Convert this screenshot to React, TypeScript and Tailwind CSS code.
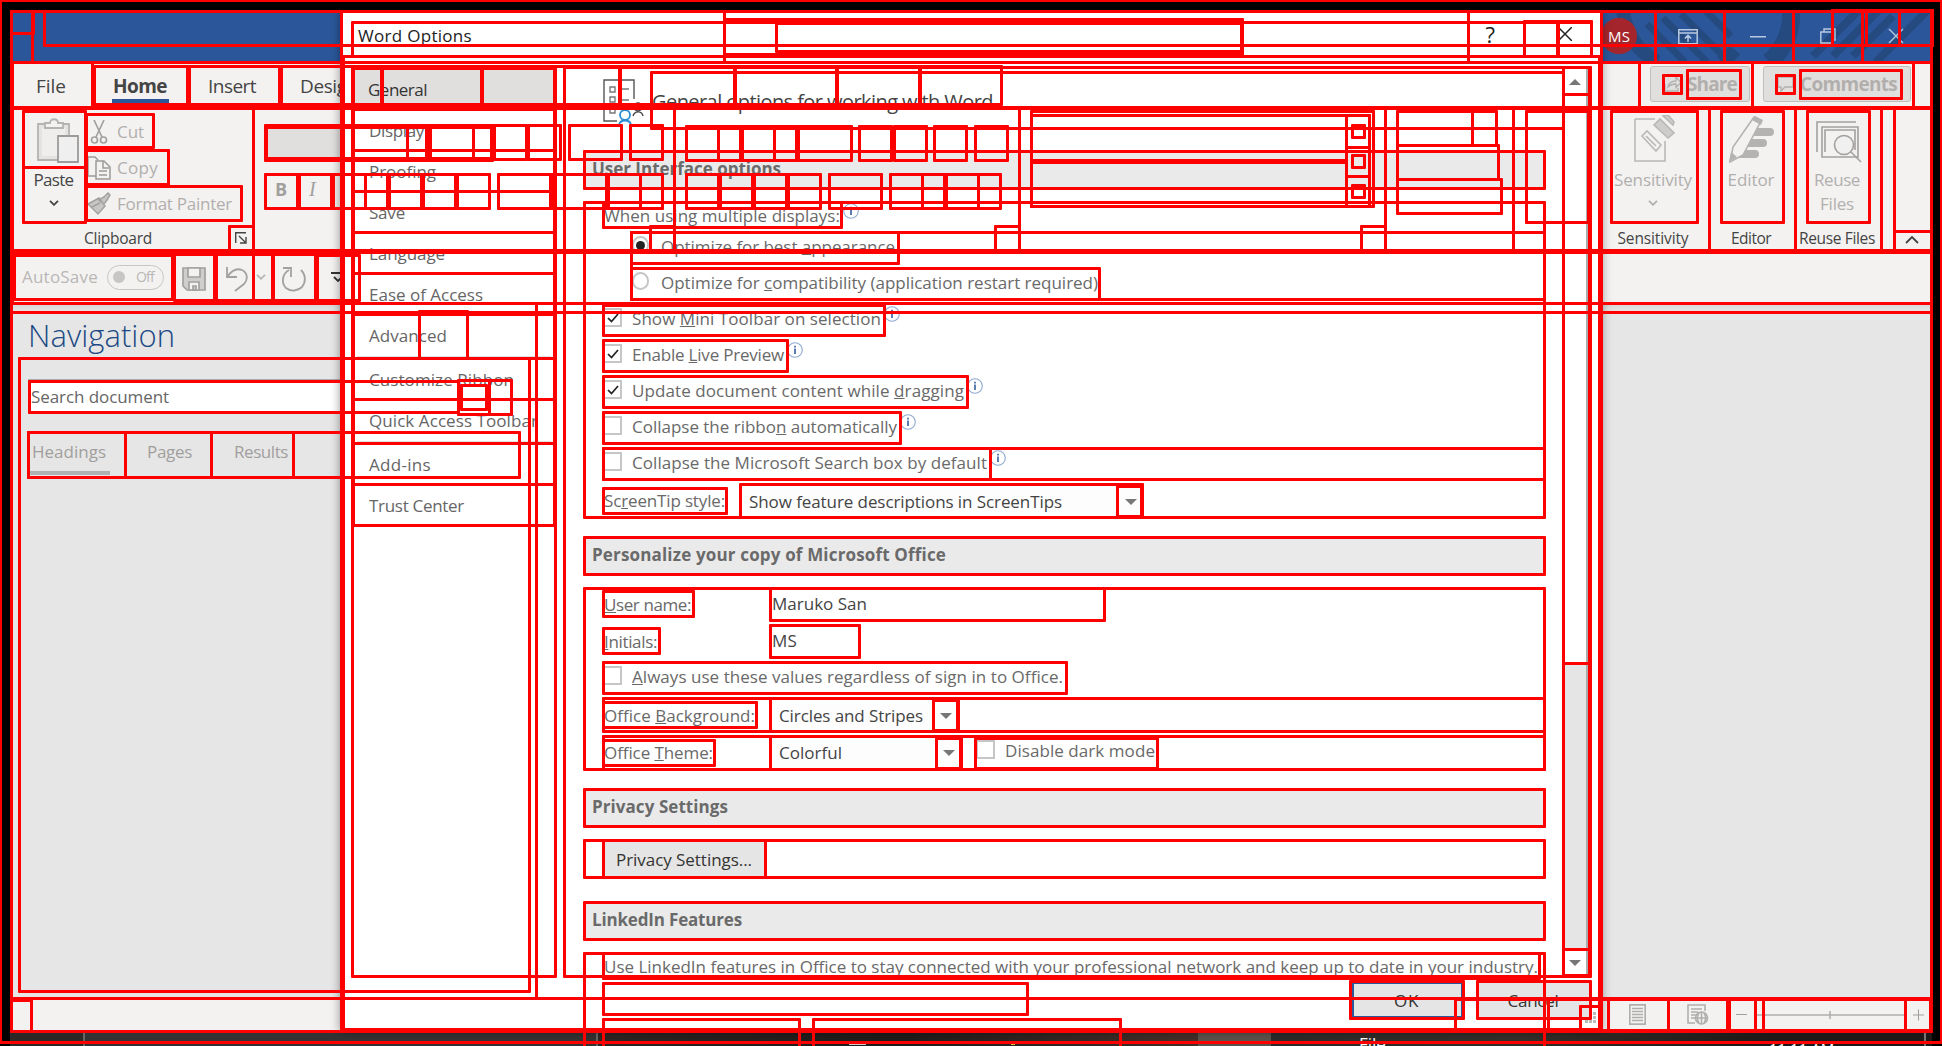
import { useLayoutEffect, useRef, useState, type ReactNode } from "react";

/* Text run whose tracking is tuned at mount so that it spans exactly `w` pixels. */
function Fit({ w, className = "", children }: { w: number; className?: string; children: ReactNode }) {
  const ref = useRef<HTMLSpanElement>(null);
  const [spacing, setSpacing] = useState(0);
  useLayoutEffect(() => {
    const el = ref.current;
    if (!el) return;
    const length = el.textContent?.length ?? 1;
    setSpacing((w - el.getBoundingClientRect().width) / length);
  }, [w]);
  return (
    <span ref={ref} className={`inline-block shrink-0 whitespace-nowrap ${className}`} style={{ letterSpacing: `${spacing}px` }}>
      {children}
    </span>
  );
}

function Chevron({ className = "" }: { className?: string }) {
  return (
    <svg viewBox="0 0 10 6" className={`h-[6px] w-[10px] shrink-0 ${className}`} fill="none" stroke="currentColor" strokeWidth="1.8">
      <path d="M1 .8 5 4.8 9 .8" />
    </svg>
  );
}

function Info() {
  return (
    <svg viewBox="0 0 16 18" className="relative -top-[5px] ml-[3px] h-[18px] w-[16px] shrink-0" fill="none">
      <circle cx="8" cy="9" r="7.3" stroke="#8ea9d0" strokeWidth="1.1" />
      <path d="M8 7.6V13M8 4.8v1.6" stroke="#3f66a3" strokeWidth="1.7" />
    </svg>
  );
}

function Triangle({ up = false }: { up?: boolean }) {
  return (
    <svg viewBox="0 0 12 6" className="h-[6px] w-[12px]" fill="#777">
      <path d={up ? "M0 6 6 0l6 6z" : "M0 0h12L6 6z"} />
    </svg>
  );
}

/* ---------- Word window ---------- */

function TitleBar() {
  return (
    <div className="flex h-[52px] shrink-0 bg-[#2b579a]">
      <div className="relative ml-auto flex w-[331px] overflow-hidden">
        <svg viewBox="0 0 331 52" className="absolute inset-0 h-full w-full" fill="none" stroke="#254a80">
          <path d="M22 0C24 22 36 40 56 52M120 52A62 62 0 0 0 134 40" strokeWidth="14" />
          <path d="M46 14 84 52M62 8 106 52M80 4 124 48M104 0 130 26" strokeWidth="7" />
          <path d="M168 52A62 62 0 0 0 190 0" strokeWidth="18" />
          <path d="M212 46 258 0M232 46 278 0M252 46 292 6M275 52 327 0" strokeWidth="8" />
        </svg>
        <div className="relative mt-[8px] flex h-[36px] w-[36px] items-center justify-center rounded-full bg-[#a4262c] text-[15px] text-white">
          <Fit w={22}>MS</Fit>
        </div>
        <div className="relative ml-[16px] flex h-full w-[276px] items-center text-[#b9c9e0]">
          <span className="flex w-[70px] justify-center pt-[1px]">
            <svg viewBox="0 0 20 16" className="h-[16px] w-[20px]" fill="none" stroke="currentColor" strokeWidth="1.5">
              <path d="M.8.8h18.4v14H.8zM.8 4h18.4M10 13V6.5M6.8 9.5 10 6.3l3.2 3.2" />
            </svg>
          </span>
          <span className="flex w-[70px] justify-center pt-[2px]">
            <svg viewBox="0 0 16 2" className="h-[2px] w-[16px]" fill="currentColor"><path d="M0 0h16v1.5H0z" /></svg>
          </span>
          <span className="flex w-[69px] justify-center">
            <svg viewBox="0 0 16 16" className="h-[16px] w-[16px]" fill="none" stroke="currentColor" strokeWidth="1.4">
              <path d="M.8 4h11v11H.8zM4 4V1h11v11h-3" />
            </svg>
          </span>
          <span className="flex w-[67px] justify-center">
            <svg viewBox="0 0 16 16" className="h-[16px] w-[16px]" fill="none" stroke="currentColor" strokeWidth="1.4">
              <path d="m1 1 14 14M15 1 1 15" />
            </svg>
          </span>
        </div>
      </div>
    </div>
  );
}

function TabRow() {
  return (
    <div className="flex h-[46px] shrink-0 pt-[11px] text-[19px] leading-[26px] text-[#444]">
      <div className="ml-[26px] w-[77px]"><Fit w={30}>File</Fit></div>
      <div className="w-[95px]">
        <Fit w={54} className="font-bold">Home</Fit>
        <div className="-ml-px h-[4px] w-[57px] bg-[#2b579a]" />
      </div>
      <div className="w-[92px]"><Fit w={48}>Insert</Fit></div>
      <div><Fit w={58}>Design</Fit></div>
      <div className="-mt-[7px] mr-[21px] ml-auto flex gap-[13px] font-bold text-[#b1afad]">
        <div className="flex h-[36px] w-[100px] items-center rounded-[3px] border border-[#c0bebc] bg-[#e1dfdd] pl-[13px]">
          <svg viewBox="0 0 18 16" className="mr-[5px] h-[16px] w-[18px]" fill="none" stroke="currentColor" strokeWidth="1.3">
            <path d="M1 8v7h13v-3M4 11c1-5 4-6 8-6V1l5 5.500-5 5V8c-4 0-6 1-8 3z" />
          </svg>
          <Fit w={50}>Share</Fit>
        </div>
        <div className="flex h-[36px] w-[148px] items-center rounded-[3px] border border-[#c0bebc] bg-[#e1dfdd] pl-[13px]">
          <svg viewBox="0 0 18 16" className="mr-[5px] h-[16px] w-[18px]" fill="none" stroke="currentColor" strokeWidth="1.3">
            <path d="M1 1h15v10H8l-4 4v-4H1z" />
          </svg>
          <Fit w={97}>Comments</Fit>
        </div>
      </div>
    </div>
  );
}

function Ribbon() {
  return (
    <div className="flex h-[143px] shrink-0 text-[17px] leading-5 text-[#b1afad]">
      <div className="ml-[13px] flex w-[230px] flex-col">
        <div className="flex h-[114px]">
          <div className="flex w-[61px] flex-col items-center pt-[10px]">
            <svg viewBox="0 0 42 46" className="ml-[8px] h-[46px] w-[42px]" fill="#e4e3e2" stroke="#b5b3b1" strokeWidth="1.8">
              <path d="M1 6h31v36H1z" />
              <path d="M5 10h23v28H5z" fill="#efeeed" stroke="none" />
              <path d="M8 10V5h5c0-5 8-5 8 0h5v5z" fill="#f3f2f1" />
              <path d="M21 18h20v26H21z" fill="#efefef" stroke="#9d9b99" />
            </svg>
            <Fit w={40} className="mt-[6px] text-[#444]">Paste</Fit>
            <Chevron className="mt-[10px] text-[#444]" />
          </div>
          <div className="flex flex-col pt-[6px] pl-[3px]">
            <div className="flex h-[36px] items-center">
              <svg viewBox="0 0 24 24" className="mr-[6px] h-[24px] w-[24px]" fill="none" stroke="#a3a19f" strokeWidth="1.7">
                <path d="m7 0 8 17M17 0 9 17" /><circle cx="7.500" cy="20" r="3" /><circle cx="16.500" cy="20" r="3" />
              </svg>
              <Fit w={27}>Cut</Fit>
            </div>
            <div className="flex h-[36px] items-center">
              <svg viewBox="0 0 24 24" className="mr-[6px] h-[24px] w-[24px]" fill="none" stroke="#9d9b99" strokeWidth="1.5">
                <path d="M9 20H1V1h7l3 3M9 5h8l6 6v12H9zM16 5v7h6M12 15h8M12 19h8" />
              </svg>
              <Fit w={41}>Copy</Fit>
            </div>
            <div className="flex h-[36px] items-center">
              <svg viewBox="0 0 24 24" className="mr-[6px] h-[24px] w-[24px]" fill="#c8c6c4" stroke="#a3a19f" strokeWidth="1.5">
                <path d="M1 12 12 6l6 8-7 8zM12 8l5-3 4-4 2 2-3 5-3 4zM5 15l8-4" />
              </svg>
              <Fit w={115}>Format Painter</Fit>
            </div>
          </div>
        </div>
        <div className="flex items-center pt-[6px] pl-[61px] text-[15.500px] text-[#444]">
          <Fit w={68}>Clipboard</Fit>
          <svg viewBox="0 0 12 12" className="ml-[83px] h-[12px] w-[12px]" fill="none" stroke="#444" strokeWidth="1.4">
            <path d="M.7 11V.7H11M4 4l6 6M11 5v6H5" />
          </svg>
        </div>
      </div>
      <div className="pt-[19px] pl-[14px]">
        <div className="h-[31px] w-[90px] bg-[#e1dfdd]" />
        <div className="mt-[21px] flex gap-[22px] pl-[8px] text-[18px] text-[#a19f9d]">
          <span className="w-[12px] font-bold">B</span>
          <span className="font-['Liberation_Serif',serif] text-[20px] italic">I</span>
        </div>
      </div>
      <div className="ml-auto flex">
        <div className="flex w-[112px] flex-col items-center pt-[7px]">
          <svg viewBox="0 0 42 48" className="ml-[4px] h-[48px] w-[42px]" fill="none" stroke="#bab8b6" strokeWidth="1.6">
            <path d="M1 4h20M31 26v20H1V4" />
            <path d="m8 21 5-5 14 14-5 6zM12 21l10 10" />
            <path d="m20 10 6-6 14 14-6 5zM29 1l10 9 1-3-6-7z" fill="#cfcdcb" />
          </svg>
          <Fit w={78} className="mt-[7px]">Sensitivity</Fit>
          <Chevron className="mt-[10px]" />
          <Fit w={71} className="mt-auto mb-[3px] text-[15.500px] text-[#444]">Sensitivity</Fit>
        </div>
        <div className="flex w-[84px] flex-col items-center pt-[7px]">
          <svg viewBox="0 0 46 48" className="h-[48px] w-[46px]" fill="#b5b3b1">
            <path d="M30 13h12a4 4 0 0 1 0 8H24zM24 24h11a4 4 0 0 1 0 8H18zM17 35h10a4 4 0 0 1 0 8H10z" />
            <path d="M26 2 33 6 15 40 2 47 5 32z" fill="#f3f2f1" stroke="#b5b3b1" strokeWidth="1.6" />
            <path d="m24 5 3-4 8 4-2 5zM1 47l2-10 6 5z" />
          </svg>
          <Fit w={47} className="mt-[7px]">Editor</Fit>
          <Fit w={40} className="mt-auto mb-[3px] text-[15.500px] text-[#444]">Editor</Fit>
        </div>
        <div className="flex w-[88px] flex-col items-center pt-[11px]">
          <svg viewBox="0 0 46 44" className="ml-[4px] h-[44px] w-[46px]" fill="none" stroke="#a3a19f" strokeWidth="1.6">
            <path d="M1 33V3h39M6 36V8h36v30H6zM9 33V11h30v20" />
            <circle cx="28" cy="26" r="9.500" fill="#f0f0f0" /><path d="m35 33 10 10" />
          </svg>
          <Fit w={46} className="mt-[7px]">Reuse</Fit>
          <Fit w={34} className="mt-[4px]">Files</Fit>
          <Fit w={76} className="mt-auto mb-[3px] text-[15.500px] text-[#444]">Reuse Files</Fit>
        </div>
        <div className="flex w-[51px] items-end justify-center pr-[3px] pb-[7px] pl-[13px]">
          <svg viewBox="0 0 14 8" className="h-[8px] w-[14px]" fill="none" stroke="#444" strokeWidth="1.8"><path d="m1 7 6-6 6 6" /></svg>
        </div>
      </div>
    </div>
  );
}

function QuickAccess() {
  return (
    <div className="flex h-[52px] shrink-0 items-center pl-[12px] text-[17px] text-[#b9b7b5]">
      <Fit w={76}>AutoSave</Fit>
      <div className="ml-[9px] flex h-[25px] w-[57px] items-center rounded-full border border-[#c8c6c4] pl-[5px] text-[14px]">
        <span className="mr-[11px] h-[12px] w-[12px] rounded-full bg-[#c8c6c4]" />
        <Fit w={18} className="leading-none">Off</Fit>
      </div>
      <svg viewBox="0 0 24 24" className="mt-[3px] ml-[18px] h-[24px] w-[24px]" fill="#d0cecc" stroke="#a3a19f" strokeWidth="1.7">
        <path d="M1 1h22v22H5l-4-4z" /><path d="M6 1h12v9H6zM7 15h10v8H7z" fill="#f3f2f1" /><path d="M11 19h3v4h-3z" />
      </svg>
      <svg viewBox="0 0 24 26" className="mt-[3px] ml-[19px] h-[26px] w-[24px]" fill="none" stroke="#a3a19f" strokeWidth="1.8">
        <path d="M2 1v10h10M2 11C7 4 12 2 17 4c6 3 6 10 2 14l-9 7" />
      </svg>
      <Chevron className="ml-[7px]" />
      <svg viewBox="0 0 26 26" className="mt-[3px] ml-[15px] h-[26px] w-[26px]" fill="none" stroke="#a3a19f" strokeWidth="1.8">
        <path d="M2 2h8v9M8 4C1 8 0 17 5 22c5 4 12 3 16-1 4-5 4-12-1-17" />
      </svg>
      <svg viewBox="0 0 14 10" className="ml-[24px] h-[10px] w-[14px]" fill="none" stroke="#333" strokeWidth="1.8"><path d="M0 1h14M3 5l4 4 4-4" /></svg>
    </div>
  );
}

function Navigation() {
  return (
    <div className="flex-1 bg-[#e6e6e6]">
      <div className="h-[67px] pt-[2px] pl-[18px] text-[31px] leading-[42px] text-[#1b4a85]"><Fit w={147} className="font-light">Navigation</Fit></div>
      <div className="ml-[18px] flex h-[35px] w-[480px] items-center border border-[#ababab] bg-white pl-[2px] text-[17px] text-[#666]">
        <Fit w={138}>Search document</Fit>
      </div>
      <div className="mt-[27px] ml-[22px] flex text-[17px] leading-[22px] text-[#a19f9d]">
        <div className="w-[115px]">
          <Fit w={74}>Headings</Fit>
          <div className="mt-[8px] -ml-[2px] h-[4px] w-[80px] bg-[#b1b1b1]" />
        </div>
        <div className="w-[87px]"><Fit w={45}>Pages</Fit></div>
        <Fit w={54}>Results</Fit>
      </div>
    </div>
  );
}

function StatusBar() {
  return (
    <div className="flex h-[33px] shrink-0 items-center bg-[#f3f2f1] text-[#b1afad]">
      <svg viewBox="0 0 17 21" className="ml-auto h-[21px] w-[17px]" fill="none" stroke="currentColor" strokeWidth="1.7">
        <path d="M.8.8h15.400v19.400H.8zM3 4.500h11M3 7.500h11M3 10.500h11M3 13.500h11M3 16.500h11" />
      </svg>
      <svg viewBox="0 0 22 21" className="mr-[27px] ml-[41px] h-[21px] w-[22px]" fill="none" stroke="currentColor" strokeWidth="1.6">
        <path d="M8 19H1V1h17v6M4 5h11M4 8h7M4 11h5M4 14h4" /><circle cx="14.500" cy="14" r="6" /><path d="M8.500 14h12M14.500 8v12M12 9c-2 3-2 7 0 10M17 9c2 3 2 7 0 10" />
      </svg>
      <span className="h-px w-[11px] bg-[#a19f9d]" />
      <svg viewBox="0 0 150 8" className="mr-[8px] ml-[10px] h-[8px] w-[148px]" stroke="currentColor" strokeWidth="1.6"><path d="M0 4h150M74 0v8" /></svg>
      <svg viewBox="0 0 12 12" className="mr-[8px] h-[12px] w-[11px]" stroke="#a19f9d" strokeWidth="1.1"><path d="M0 6h12M6 0v12" /></svg>
    </div>
  );
}

function Taskbar() {
  return (
    <div className="mx-[10px] flex h-[15px] overflow-hidden bg-[#333]">
      <div className="w-[73px] bg-[#2d2825]" />
      <div className="w-[2px] bg-[#666]" />
      <div className="w-[511px]" />
      <div className="w-[2px] bg-[#666]" />
      <div className="flex w-[600px] bg-linear-to-r from-[#2c2523] via-[#1d1c1b] to-[#45302a]">
        <span className="mt-[12px] ml-[251px] h-[2px] w-[17px] bg-[#ccc]" />
        <span className="mt-[12px] ml-[145px] h-[2px] w-[4px] bg-[#e8c43c]" />
      </div>
      <div className="w-[73px] bg-[#5c534c]" />
      <div className="flex-1 bg-linear-to-r from-[#2b2b2b] via-[#33302a] to-[#1c1918] pt-[3px] pl-[88px] text-[17px] leading-5 text-white">File</div>
      <div className="w-[155px] overflow-hidden bg-[#1c1918] pt-[9px] text-[15px] leading-4 text-white">11:11 AM</div>
      <div className="w-[2px] bg-[#777]" />
      <div className="w-[6px] bg-[#1c1918]" />
    </div>
  );
}

/* ---------- Word Options dialog ---------- */

const categories: { label: string; w: number; end?: boolean }[] = [
  { label: "General", w: 59 },
  { label: "Display", w: 55 },
  { label: "Proofing", w: 67 },
  { label: "Save", w: 36 },
  { label: "Language", w: 76 },
  { label: "Ease of Access", w: 114 },
  { label: "Advanced", w: 78, end: true },
  { label: "Customize Ribbon", w: 145 },
  { label: "Quick Access Toolbar", w: 169, end: true },
  { label: "Add-ins", w: 62 },
  { label: "Trust Center", w: 95 },
];

function CategoryList() {
  return (
    <div className="w-[202px] shrink-0 text-[17px] leading-5 text-[#666]">
      {categories.map((c, i) => (
        <div key={c.label}>
          <div className={i === 0 ? "flex h-[41px] items-center border border-dotted border-[#555] bg-[#e1dfdd] pt-[2px] pl-[14px] text-[#333] outline-2 outline-[#b0b0b0]" : "flex h-[41px] items-center pt-[2px] pl-[16px]"}>
            <Fit w={c.w}>{c.label}</Fit>
          </div>
          {c.end && <div className="mx-[4px] my-px h-px bg-[#e1e1e1]" />}
        </div>
      ))}
    </div>
  );
}

function Section({ title, w }: { title: string; w: number }) {
  return (
    <div className="flex h-[38px] items-center bg-[#eaeaea] pb-[2px] pl-[7px] font-bold text-[#6a6a6a]">
      <Fit w={w}>{title}</Fit>
    </div>
  );
}

function Check({ on = false, w, children }: { on?: boolean; w: number; children: ReactNode }) {
  return (
    <div className="flex items-center">
      <span className="relative -top-[1.500px] mr-[10px] flex h-[19px] w-[19px] items-center justify-center border-2 border-[#c6c6c6] bg-white">
        {on && (
          <svg viewBox="0 0 12 10" className="h-[10px] w-[12px]" fill="none" stroke="#222" strokeWidth="1.7"><path d="m1 5 3.500 3.500L11 1" /></svg>
        )}
      </span>
      <Fit w={w}>{children}</Fit>
    </div>
  );
}

function Radio({ on = false, w, children }: { on?: boolean; w: number; children: ReactNode }) {
  return (
    <div className="flex h-[36px] items-center pl-[47px]">
      <span className="relative -top-[2px] mr-[12px] flex h-[18px] w-[17px] items-center justify-center rounded-full border-2 border-[#c6c6c6]">
        {on && <span className="h-[9px] w-[9px] rounded-full bg-[#222]" />}
      </span>
      <Fit w={w}>{children}</Fit>
    </div>
  );
}

function Combo({ className, w, children }: { className: string; w: number; children: ReactNode }) {
  return (
    <div className={`flex h-[33px] items-center justify-between bg-[#fdfdfd] pt-px pr-[7px] pl-[8px] text-[#444] ${className}`}>
      <Fit w={w}>{children}</Fit>
      <Triangle />
    </div>
  );
}

function Options() {
  return (
    <div className="flex h-full flex-1 overflow-hidden text-[17px] leading-5 text-[#696969]">
      <div className="w-[998px] pl-[20px]">
        <div className="flex h-[83px] pl-[18px]">
          <svg viewBox="0 0 42 46" className="mt-[11px] h-[46px] w-[42px]" fill="none" stroke="#555" strokeWidth="1.400">
            <path d="M31 20V1H1v41h13" />
            <path d="M7 8h5v5H7zM7 18h5v5H7zM7 29h5v5H7zM17 10h9M17 21h9" stroke="#777" />
            <circle cx="35" cy="28" r="4" stroke="#444" /><path d="M30 37c2-6 9-5 10 0" stroke="#444" />
            <circle cx="22" cy="36" r="5" stroke="#2a8dd4" strokeWidth="1.800" /><path d="M16 46c1-6 11-6 12 0" stroke="#2a8dd4" strokeWidth="1.800" />
          </svg>
          <Fit w={341} className="mt-[21px] ml-[7px] text-[20px] leading-[26px] text-[#444]">General options for working with Word</Fit>
        </div>
        <div className="w-[960px]">
          <Section title="User Interface options" w={189} />
          <div className="mt-[12px] flex h-[28px] items-center pt-[2px] pl-[19px]">
            <Fit w={236}>When using multiple displays:</Fit><Info />
          </div>
          <Radio on w={234}>Optimize for best <u>a</u>ppearance</Radio>
          <Radio w={437}>Optimize for <u>c</u>ompatibility (application restart required)</Radio>
          <div className="flex h-[36px] items-center pl-[18px]"><Check on w={249}>Show <u>M</u>ini Toolbar on selection</Check><Info /></div>
          <div className="flex h-[36px] items-center pl-[18px]"><Check on w={152}>Enable <u>L</u>ive Preview</Check><Info /></div>
          <div className="flex h-[36px] items-center pl-[18px]"><Check on w={332}>Update document content while <u>d</u>ragging</Check><Info /></div>
          <div className="flex h-[36px] items-center pl-[18px]"><Check w={265}>Collapse the ribbo<u>n</u> automatically</Check><Info /></div>
          <div className="flex h-[36px] items-center pl-[18px]"><Check w={355}>Collapse the Microsoft Search box by default</Check><Info /></div>
          <div className="mt-[3px] flex h-[34px] items-center pl-[19px]">
            <Fit w={121}>Sc<u>r</u>eenTip style:</Fit>
            <Combo className="ml-[16px] w-[403px]" w={313}>Show feature descriptions in ScreenTips</Combo>
          </div>
          <div className="h-[19px]" />
          <Section title="Personalize your copy of Microsoft Office" w={354} />
          <div className="mt-[13px] flex h-[33px] items-center pl-[19px]">
            <div className="w-[168px]"><Fit w={87}><u>U</u>ser name:</Fit></div>
            <Fit w={95} className="-mt-[2px] text-[#444]">Maruko San</Fit>
          </div>
          <div className="mt-[4px] flex h-[33px] items-center pl-[19px]">
            <div className="w-[168px]"><Fit w={53}><u>I</u>nitials:</Fit></div>
            <Fit w={25} className="-mt-[2px] text-[#444]">MS</Fit>
          </div>
          <div className="mt-[4px] flex h-[32px] items-center pb-[3px] pl-[18px]"><Check w={431}><u>A</u>lways use these values regardless of sign in to Office.</Check></div>
          <div className="mt-[4px] flex h-[34px] items-center pl-[19px]">
            <div className="w-[167px] pt-px"><Fit w={151}>Office <u>B</u>ackground:</Fit></div>
            <Combo className="w-[188px]" w={144}>Circles and Stripes</Combo>
          </div>
          <div className="mt-[4px] flex h-[33px] items-center pl-[19px]">
            <div className="w-[167px] pt-px"><Fit w={109}>Office <u>T</u>heme:</Fit></div>
            <Combo className="mr-[14px] w-[191px]" w={63}>Colorful</Combo>
            <div className="pb-[3px]"><Check w={150}>Disable dark mode</Check></div>
          </div>
          <div className="h-[20px]" />
          <Section title="Privacy Settings" w={136} />
          <div className="mt-[13px] ml-[19px] flex h-[38px] w-[161px] items-center bg-[#e5e5e5] pt-[2px] pl-[12px] text-[#333]">
            <Fit w={136}>Privacy Settings...</Fit>
          </div>
          <div className="h-[24px]" />
          <Section title="LinkedIn Features" w={150} />
          <div className="mt-[17px] pl-[19px]">
            <Fit w={934}>Use LinkedIn features in Office to stay connected with your professional network and keep up to date in your industry.</Fit>
          </div>
        </div>
      </div>
      <div className="flex w-[25px] flex-col border-r-2 border-[#ababab] bg-[#e5e5e5]">
        <div className="flex h-[27px] items-center justify-center bg-white"><Triangle up /></div>
        <div className="h-[568px] bg-white" />
        <div className="mt-auto flex h-[26px] items-center justify-center border-b border-[#ababab] bg-white"><Triangle /></div>
      </div>
    </div>
  );
}

function Dialog() {
  return (
    <div className="absolute top-[12px] left-[342px] flex h-[1018px] w-[1258px] flex-col bg-white shadow-[0_0_9px_2px_rgba(0,0,0,0.400)]">
      <div className="flex h-[56px] shrink-0 pl-[16px] text-[#222]">
        <Fit w={114} className="pt-[12px] text-[17px] leading-6">Word Options</Fit>
        <span className="mt-[6px] mr-[63px] ml-auto text-[22px] leading-[32px]">?</span>
        <svg viewBox="0 0 14 14" className="mt-[15px] mr-[28px] h-[14px] w-[14px]" stroke="currentColor" strokeWidth="1.500"><path d="m0 0 14 14M14 0 0 14" /></svg>
      </div>
      <div className="flex h-[908px] shrink-0 pl-[11px]">
        <CategoryList />
        <div className="w-[10px]" />
        <Options />
        <div className="w-[10px]" />
      </div>
      <div className="flex h-[54px] pt-[6px] text-[17px] leading-5 text-[#333]">
        <div className="ml-[1010px] flex h-[36px] w-[111px] items-center justify-center border-2 border-[#2b579a] bg-[#e5e5e5] pt-px pr-[2px]"><Fit w={25}>OK</Fit></div>
        <div className="ml-[15px] flex h-[36px] w-[112px] items-center justify-center bg-[#e5e5e5] pt-px pr-[2px]"><Fit w={51}>Cancel</Fit></div>
        <svg viewBox="0 0 12 12" className="mt-[30px] -ml-[5px] h-[12px] w-[12px]" fill="#bbb">
          <path d="M8 0h3v3H8zM8 4h3v3H8zM8 8h3v3H8zM4 4h3v3H4zM4 8h3v3H4zM0 8h3v3H0z" />
        </svg>
      </div>
    </div>
  );
}

/* ---------- Accessibility element bounds: [left, top, right, bottom] of each outline's centre line ---------- */

const bounds: [number, number, number, number][] = [
  [0, 0, 1941, 1042], [11, 11, 1931, 1031], [11, 11, 33, 33], [11, 11, 32, 62], [44, 11, 1932, 45], [11, 11, 1931, 62],
  [1832, 10, 1862, 45], [1866, 10, 1899, 45], [1899, 10, 1932, 45], [1832, 10, 1932, 45],
  [1601, 11, 1655, 62], [1655, 11, 1724, 62], [1724, 11, 1793, 62], [1793, 11, 1862, 62], [1862, 11, 1931, 62],
  [341, 11, 1601, 1031], [343, 56, 1599, 1029], [352, 22, 1591, 56], [1524, 21, 1557, 56], [1558, 21, 1591, 56],
  [724, 11, 1468, 62], [724, 19, 1242, 54], [776, 23, 1241, 51],
  [11, 62, 92, 107], [94, 66, 187, 104], [189, 66, 279, 104], [281, 66, 381, 104], [382, 66, 481, 104], [482, 66, 619, 104],
  [620, 66, 734, 104], [735, 66, 836, 104], [837, 66, 919, 104], [920, 66, 1001, 104],
  [12, 62, 1931, 107], [11, 108, 1931, 250], [12, 108, 253, 251],
  [352, 67, 555, 976], [353, 68, 554, 108], [353, 109, 554, 150], [353, 150, 554, 191], [353, 191, 554, 232], [353, 232, 554, 273],
  [353, 273, 554, 314], [353, 314, 554, 358], [353, 358, 554, 399], [353, 399, 554, 443], [353, 443, 554, 484], [353, 484, 554, 525],
  [564, 67, 1590, 976], [1563, 67, 1589, 94], [1563, 94, 1589, 663], [1563, 663, 1589, 949], [1563, 949, 1589, 975],
  [23, 111, 85, 167], [23, 167, 85, 222], [86, 114, 153, 147], [86, 150, 168, 184], [86, 186, 241, 220], [229, 226, 253, 250],
  [265, 125, 427, 160], [266, 127, 407, 158], [407, 127, 426, 158], [429, 125, 492, 160], [430, 127, 473, 158], [473, 127, 491, 158],
  [494, 125, 526, 159], [528, 125, 560, 159], [569, 125, 621, 159], [630, 125, 662, 159],
  [686, 126, 718, 160], [718, 126, 740, 160], [742, 126, 774, 160], [774, 126, 796, 160], [798, 126, 851, 160], [859, 126, 891, 160],
  [894, 126, 926, 160], [934, 126, 966, 160], [975, 126, 1007, 160],
  [265, 174, 297, 208], [299, 174, 331, 208], [333, 174, 365, 208], [365, 174, 387, 208], [389, 174, 421, 208], [423, 174, 455, 208],
  [457, 174, 489, 208], [498, 174, 550, 208], [552, 174, 606, 208], [608, 174, 640, 208], [640, 174, 662, 208],
  [686, 174, 718, 208], [720, 174, 752, 208], [754, 174, 786, 208], [788, 174, 820, 208], [829, 174, 881, 208], [890, 174, 922, 208],
  [922, 174, 944, 208], [946, 174, 978, 208], [978, 174, 1000, 208],
  [253, 108, 674, 250], [650, 226, 674, 250], [674, 108, 1019, 250], [995, 226, 1019, 250], [1019, 108, 1385, 250], [1361, 226, 1385, 250],
  [1031, 111, 1373, 206], [1031, 115, 1369, 206], [1031, 115, 1346, 160], [1031, 162, 1346, 206], [1346, 115, 1369, 147], [1346, 147, 1369, 176], [1346, 176, 1369, 206],
  [1352, 125, 1364, 137], [1352, 155, 1364, 167], [1352, 185, 1364, 197],
  [1397, 111, 1472, 145], [1472, 111, 1496, 145], [1397, 145, 1498, 179], [1397, 179, 1501, 213],
  [1385, 108, 1513, 250], [1526, 111, 1588, 222], [1601, 108, 1709, 250], [1611, 111, 1697, 222], [1721, 111, 1783, 222], [1807, 111, 1869, 222],
  [1709, 108, 1795, 250], [1795, 108, 1881, 250], [1894, 108, 1931, 250], [1894, 231, 1931, 250],
  [1639, 62, 1752, 107], [1752, 62, 1913, 107], [1663, 75, 1681, 93], [1687, 70, 1740, 98], [1776, 75, 1794, 93], [1800, 70, 1901, 98],
  [12, 252, 1931, 303], [14, 255, 172, 299], [174, 254, 214, 300], [216, 254, 253, 300], [253, 254, 272, 300], [273, 254, 315, 300], [317, 255, 359, 300],
  [11, 312, 1931, 998], [11, 303, 536, 998], [19, 358, 529, 991], [419, 311, 467, 358],
  [29, 381, 458, 412], [458, 380, 489, 414], [489, 380, 511, 414], [461, 385, 486, 409],
  [28, 432, 519, 477], [28, 432, 125, 477], [125, 432, 211, 477], [211, 432, 293, 477],
  [651, 72, 1563, 128], [584, 151, 1544, 188], [584, 202, 1544, 517], [603, 202, 841, 227], [631, 232, 1544, 299], [631, 232, 898, 263],
  [631, 268, 1099, 299], [603, 305, 884, 335], [603, 340, 787, 371], [603, 376, 967, 407], [603, 412, 900, 443], [603, 448, 990, 479], [603, 448, 1544, 479],
  [603, 488, 726, 513], [740, 484, 1142, 517], [1117, 486, 1141, 516],
  [584, 537, 1544, 574], [584, 588, 1544, 769], [603, 591, 693, 616], [770, 588, 1104, 620], [603, 628, 659, 653], [770, 625, 859, 657],
  [603, 662, 1066, 693], [603, 698, 1544, 731], [603, 702, 756, 727], [770, 698, 958, 731], [933, 700, 957, 730],
  [603, 736, 1544, 769], [603, 740, 714, 765], [770, 736, 961, 769], [936, 738, 960, 768], [975, 738, 1157, 768],
  [584, 789, 1544, 826], [584, 840, 1544, 877], [603, 840, 765, 877], [584, 902, 1544, 939], [584, 953, 1544, 1060], [603, 953, 1539, 978],
  [603, 983, 1027, 1014], [603, 1019, 799, 1060], [813, 1019, 1120, 1060],
  [1350, 981, 1463, 1018], [1477, 981, 1590, 1018], [1580, 1006, 1599, 1029],
  [11, 998, 1931, 1031], [11, 1000, 31, 1031], [1455, 999, 1548, 1030], [1548, 999, 1608, 1030], [1608, 999, 1668, 1030], [1668, 999, 1727, 1030],
  [1729, 999, 1755, 1030], [1755, 999, 1763, 1030], [1763, 999, 1905, 1030], [1905, 999, 1930, 1030],
];

export default function App() {
  return (
    <div className="relative h-[1046px] w-[1942px] overflow-hidden bg-black pt-[10px] font-['Open_Sans','Noto_Sans',sans-serif]">
      <div className="mx-[10px] flex h-[1021px] flex-col bg-[#f3f2f1]">
        <TitleBar />
        <TabRow />
        <Ribbon />
        <QuickAccess />
        <div className="h-[9px] shrink-0 bg-linear-to-b from-[#d4d4d4] to-[#e6e6e6]" />
        <Navigation />
        <StatusBar />
      </div>
      <Taskbar />
      <Dialog />
      {bounds.map(([l, t, r, b], i) => (
        <div
          key={i}
          className="pointer-events-none absolute rounded-[1px] border-[3px] border-[#ff0000]"
          style={{ left: l - 1, top: t - 1, width: r - l + 3, height: b - t + 3 }}
        />
      ))}
    </div>
  );
}
